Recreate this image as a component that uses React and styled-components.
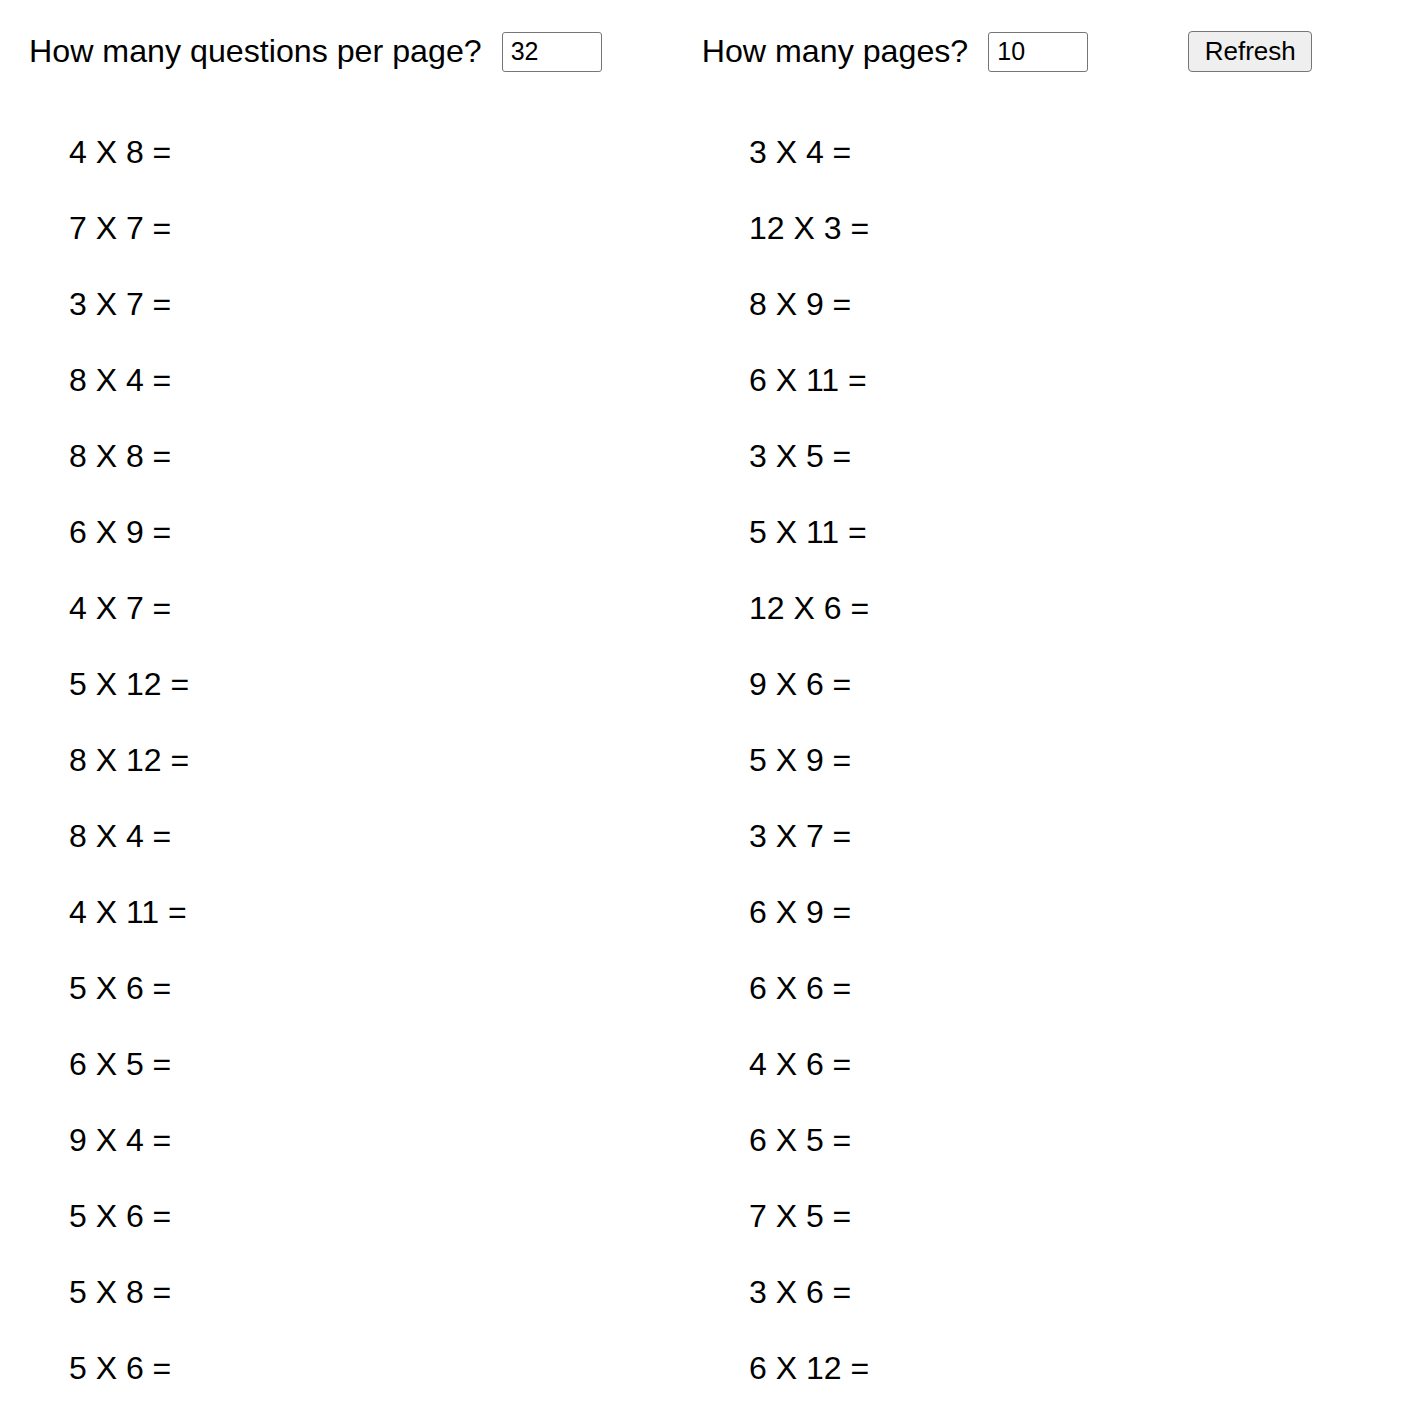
import { useState } from "react";
import styled, { createGlobalStyle } from "styled-components";

const GlobalStyle = createGlobalStyle`
    body {
        margin: 0;
        background: #fff;
        color: #000;
        font-family: "Liberation Sans", Arial, sans-serif;
    }
`

const Toolbar = styled.div`
    display: flex;
    align-items: center;
    column-gap: 100px;
    padding: 31px 0 0 29px;
`

const Field = styled.label`
    display: flex;
    align-items: center;
    column-gap: 20px;
    font-size: 32.2px;
`

const NumberInput = styled.input`
    box-sizing: border-box;
    width: 100px;
    height: 40px;
    padding: 0 8px;
    border: 1px solid #767676;
    border-radius: 3px;
    font-family: "Liberation Sans", Arial, sans-serif;
    font-size: 25px;
    color: #000;
`

const Button = styled.button`
    box-sizing: border-box;
    width: 124px;
    height: 41px;
    background: #efefef;
    border: 1px solid #767676;
    border-radius: 4px;
    font-family: "Liberation Sans", Arial, sans-serif;
    font-size: 26px;
    color: #000;
`

const Sheet = styled.div`
    display: grid;
    grid-template-columns: 680px 680px;
    padding: 42px 0 0 69px;
`

const Column = styled.ul`
    list-style: none;
    margin: 0;
    padding: 0;
`

const Question = styled.li`
    height: 76px;
    line-height: 76px;
    font-size: 32px;
    white-space: pre;
`

const left = [
    [4, 8], [7, 7], [3, 7], [8, 4], [8, 8], [6, 9], [4, 7], [5, 12],
    [8, 12], [8, 4], [4, 11], [5, 6], [6, 5], [9, 4], [5, 6], [5, 8], [5, 6],
]
const right = [
    [3, 4], [12, 3], [8, 9], [6, 11], [3, 5], [5, 11], [12, 6], [9, 6],
    [5, 9], [3, 7], [6, 9], [6, 6], [4, 6], [6, 5], [7, 5], [3, 6], [6, 12],
]

const App = () => {
    const [perPage, setPerPage] = useState("32")
    const [pages, setPages] = useState("10")
    return (
        <>
            <GlobalStyle />
            <Toolbar>
                <Field>
                    How many questions per page?
                    <NumberInput value={perPage} onChange={e => setPerPage(e.target.value)} />
                </Field>
                <Field>
                    How many pages?
                    <NumberInput value={pages} onChange={e => setPages(e.target.value)} />
                </Field>
                <Button>Refresh</Button>
            </Toolbar>
            <Sheet>
                {[left, right].map((col, i) => (
                    <Column key={i}>
                        {col.map(([a, b], j) => (
                            <Question key={j}>{`${a} X ${b} =`}</Question>
                        ))}
                    </Column>
                ))}
            </Sheet>
        </>
    )
}

export default App
